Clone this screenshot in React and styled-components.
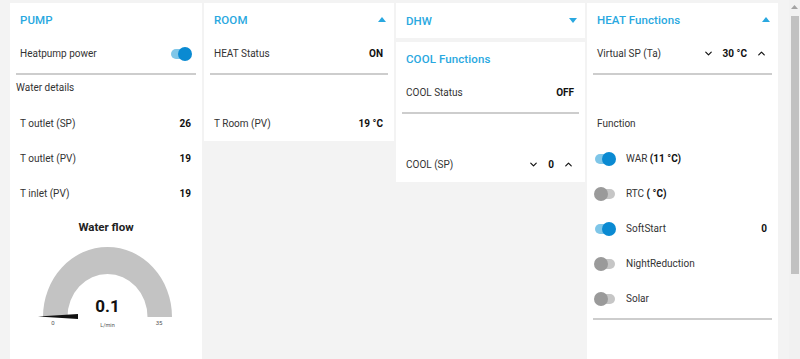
import React from 'react'
import styled, { createGlobalStyle } from 'styled-components'
import { ChevronDown, ChevronUp } from 'lucide-react'

const GlobalStyle = createGlobalStyle`
    html, body {
        margin: 0;
        padding: 0;
        background: #f3f3f3;
        font-family: Roboto, "Noto Sans", sans-serif;
        color: #333;
        overflow: hidden;
    }
`

function Toggle({ on }) {
    return (
        <Track on={on ? 1 : 0}>
            <Thumb on={on ? 1 : 0} />
        </Track>
    )
}

function Caret({ up }) {
    return (
        <svg width="8" height="5" viewBox="0 0 8 5">
            {up ? <polygon points="0,5 8,5 4,0" fill="#29a8e0" /> : <polygon points="0,0 8,0 4,5" fill="#29a8e0" />}
        </svg>
    )
}

function Stepper({ value }) {
    return (
        <StepWrap>
            <ChevronDown size={11} strokeWidth={2.6} />
            <Value>{value}</Value>
            <ChevronUp size={11} strokeWidth={2.6} />
        </StepWrap>
    )
}

function Gauge() {
    // elliptical half ring, 0..35 L/min
    return (
        <svg width="190" height="96" viewBox="0 0 190 96">
            <path
                d="M 32 78 A 64.5 70 0 0 1 161 78 L 136.5 78 A 40 43 0 0 0 56.5 78 Z"
                fill="#c3c3c3"
            />
            <polygon points="27,77.5 67,75 67,80" fill="#111" />
            <text x="96.5" y="73" textAnchor="middle" fontSize="17" fontWeight="700" fill="#111">0.1</text>
            <text x="96.5" y="88" textAnchor="middle" fontSize="5.5" fill="#555">L/min</text>
            <text x="42" y="86" textAnchor="middle" fontSize="6" fill="#555">0</text>
            <text x="148" y="86" textAnchor="middle" fontSize="6" fill="#555">35</text>
        </svg>
    )
}

export default function App() {
    return (
        <>
            <GlobalStyle />
            <Grid>
                <Column>
                    <Card tall>
                        <Header>
                            <Title>PUMP</Title>
                        </Header>
                        <Row>
                            <Label>Heatpump power</Label>
                            <Toggle on />
                        </Row>
                        <Divider />
                        <SubHead>Water details</SubHead>
                        <Row>
                            <Label>T outlet (SP)</Label>
                            <Value>26</Value>
                        </Row>
                        <Row>
                            <Label>T outlet (PV)</Label>
                            <Value>19</Value>
                        </Row>
                        <Row>
                            <Label>T inlet (PV)</Label>
                            <Value>19</Value>
                        </Row>
                        <GaugeBox>
                            <GaugeTitle>Water flow</GaugeTitle>
                            <Gauge />
                        </GaugeBox>
                    </Card>
                </Column>

                <Column>
                    <Card>
                        <Header>
                            <Title>ROOM</Title>
                            <Caret up />
                        </Header>
                        <Row>
                            <Label>HEAT Status</Label>
                            <Value>ON</Value>
                        </Row>
                        <Divider />
                        <Spacer />
                        <Row>
                            <Label>T Room (PV)</Label>
                            <Value>19 °C</Value>
                        </Row>
                    </Card>
                </Column>

                <Column>
                    <Card>
                        <Header small>
                            <Title>DHW</Title>
                            <Caret />
                        </Header>
                    </Card>
                    <Card>
                        <Header>
                            <Title>COOL Functions</Title>
                        </Header>
                        <Row>
                            <Label>COOL Status</Label>
                            <Value>OFF</Value>
                        </Row>
                        <Divider />
                        <Spacer extra={2} />
                        <Row>
                            <Label>COOL (SP)</Label>
                            <Stepper value="0" />
                        </Row>
                    </Card>
                </Column>

                <Column>
                    <Card tall>
                        <Header>
                            <Title>HEAT Functions</Title>
                            <Caret up />
                        </Header>
                        <Row>
                            <Label>Virtual SP (Ta)</Label>
                            <Stepper value="30 °C" />
                        </Row>
                        <Divider />
                        <Spacer />
                        <Row>
                            <Label>Function</Label>
                        </Row>
                        <SwitchRow>
                            <Toggle on />
                            <Label>WAR <b>(11 °C)</b></Label>
                        </SwitchRow>
                        <SwitchRow>
                            <Toggle />
                            <Label>RTC <b>( °C)</b></Label>
                        </SwitchRow>
                        <SwitchRow>
                            <Toggle on />
                            <Label>SoftStart</Label>
                            <Value>0</Value>
                        </SwitchRow>
                        <SwitchRow>
                            <Toggle />
                            <Label>NightReduction</Label>
                        </SwitchRow>
                        <SwitchRow>
                            <Toggle />
                            <Label>Solar</Label>
                        </SwitchRow>
                        <Divider />
                    </Card>
                </Column>
            </Grid>
            <ScrollBar>
                <ScrollArrow>
                    <svg width="7" height="4" viewBox="0 0 7 4"><polygon points="0,4 7,4 3.5,0" fill="#a3a3a3" /></svg>
                </ScrollArrow>
                <ScrollThumb />
            </ScrollBar>
        </>
    )
}

const Grid = styled.div`
    display: grid;
    grid-template-columns: 192px 190px 189px 191px;
    column-gap: 2px;
    padding: 3px 0 3px 10px;
    align-items: start;
`

const Column = styled.div`
    display: flex;
    flex-direction: column;
    gap: 4px;
`

const Card = styled.div`
    background: #fff;
    display: flex;
    flex-direction: column;
    min-height: ${props => props.tall ? '454px' : '0'};
`

const Header = styled.div`
    height: ${props => props.small ? '35px' : '33px'};
    display: flex;
    align-items: center;
    justify-content: space-between;
    padding: 0 8px 0 10px;
`

const Title = styled.div`
    color: #29a8e0;
    font-size: 11.5px;
    font-weight: 500;
    letter-spacing: 0.1px;
`

const Row = styled.div`
    height: 35px;
    display: flex;
    align-items: center;
    justify-content: space-between;
    padding: 0 11px 0 10px;
`

const SwitchRow = styled(Row)`
    justify-content: flex-start;
    gap: 11px;
    padding-left: 8px;

    & > span:last-child {
        margin-left: auto;
    }
`

const Label = styled.div`
    font-size: 10px;
    color: #333;

    b {
        font-weight: 700;
        color: #111;
    }
`

const Value = styled.span`
    font-size: 10px;
    font-weight: 700;
    color: #111;
`

const Divider = styled.div`
    height: 2px;
    background: #cdcdcd;
    margin: 2px 6px 0;
`

const Spacer = styled.div`
    height: ${props => 31 + (props.extra || 0)}px;
`

const SubHead = styled.div`
    height: 24px;
    line-height: 26px;
    font-size: 10px;
    color: #333;
    padding-left: 6px;
    margin-bottom: 7px;
`

const StepWrap = styled.div`
    display: flex;
    align-items: center;
    gap: 9px;
    color: #111;
`

const Track = styled.span`
    position: relative;
    width: 20px;
    height: 10px;
    border-radius: 5px;
    flex-shrink: 0;
    background: ${props => props.on ? '#7fc6e8' : '#c6c6c6'};
`

const Thumb = styled.span`
    position: absolute;
    top: -2px;
    left: ${props => props.on ? '7px' : '-1px'};
    width: 14px;
    height: 14px;
    border-radius: 50%;
    background: ${props => props.on ? '#0a8ad2' : '#9a9a9a'};
`

const GaugeBox = styled.div`
    display: flex;
    flex-direction: column;
    align-items: center;
    padding-top: 4px;
`

const GaugeTitle = styled.div`
    font-size: 11.5px;
    font-weight: 700;
    color: #222;
    height: 24px;
    line-height: 24px;
`

const ScrollBar = styled.div`
    position: fixed;
    top: 0;
    right: 0;
    width: 11px;
    height: 100vh;
    background: #f1f1f1;
    display: flex;
    flex-direction: column;
    align-items: center;
`

const ScrollArrow = styled.div`
    height: 14px;
    display: flex;
    align-items: center;
    justify-content: center;
`

const ScrollThumb = styled.div`
    width: 8px;
    height: 258px;
    margin-top: 2px;
    background: #c1c1c1;
`
